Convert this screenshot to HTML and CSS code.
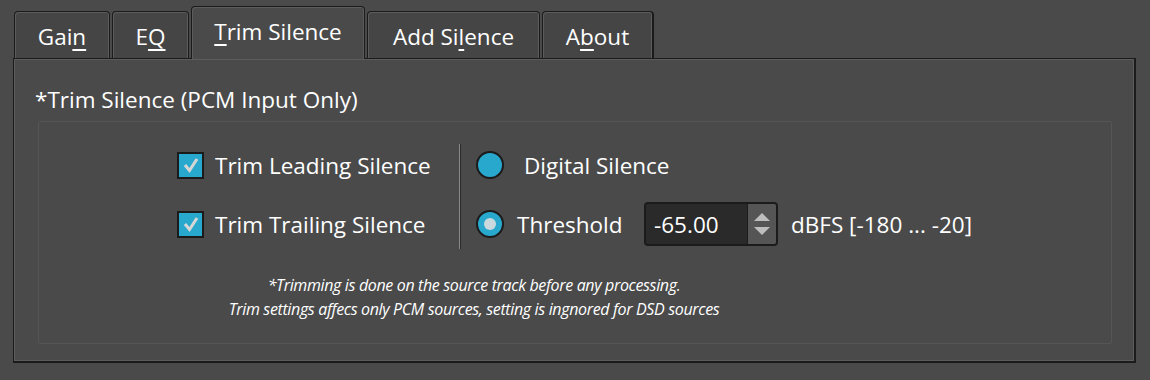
FILE: index.html
```html
<!DOCTYPE html>
<html lang="en">
<head>
    <meta charset="UTF-8">
    <title>Trim Silence</title>
    <link rel="stylesheet" href="styles.css">
</head>
<body>
    <div class="window">
        <div class="tabs">
            <div class="tab tab-gain">Gai<u>n</u></div>
            <div class="tab tab-eq">E<u>Q</u></div>
            <div class="tab tab-trim active"><u>T</u>rim Silence</div>
            <div class="tab tab-add">Add Si<u>l</u>ence</div>
            <div class="tab tab-about">A<u>b</u>out</div>
        </div>

        <div class="panel">
            <div class="panel-title">*Trim Silence (PCM Input Only)</div>

            <div class="group">
                <div class="options">
                    <div class="checks">
                        <label class="row">
                            <span class="checkbox">
                                <svg width="18" height="18" viewBox="0 0 18 18"><polyline points="3,9 7.5,14.5 15,3" fill="none" stroke="#d6d6d6" stroke-width="3"/></svg>
                            </span>
                            Trim Leading Silence
                        </label>
                        <label class="row">
                            <span class="checkbox">
                                <svg width="18" height="18" viewBox="0 0 18 18"><polyline points="3,9 7.5,14.5 15,3" fill="none" stroke="#d6d6d6" stroke-width="3"/></svg>
                            </span>
                            Trim Trailing Silence
                        </label>
                    </div>

                    <div class="separator"></div>

                    <div class="radios">
                        <label class="row">
                            <span class="radio"></span>
                            <span class="radio-label wide">Digital Silence</span>
                        </label>
                        <div class="row">
                            <span class="radio checked"></span>
                            <span class="radio-label threshold">Threshold</span>
                            <div class="spinbox">
                                <span class="spin-value">-65.00</span>
                                <span class="spin-buttons">
                                    <svg width="16" height="8" viewBox="0 0 16 8"><polygon points="8,0 16,8 0,8" fill="#bdbdbd"/></svg>
                                    <svg width="16" height="8" viewBox="0 0 16 8"><polygon points="0,0 16,0 8,8" fill="#bdbdbd"/></svg>
                                </span>
                            </div>
                            <span class="unit">dBFS [-180 ... -20]</span>
                        </div>
                    </div>
                </div>

                <div class="notes">
                    <p>*Trimming is done on the source track before any processing.</p>
                    <p>Trim settings affecs only PCM sources, setting is ingnored for DSD sources</p>
                </div>
            </div>
        </div>
    </div>
</body>
</html>
```

FILE: styles.css
```css
:root {
    --bg: #4a4a4a;
    --tab-bg: #454545;
    --dark: #1b1b1b;
    --light-edge: #5c5c5c;
    --blue: #29a8cd;
    --text: #ffffff;
}

* {
    box-sizing: border-box;
}

body {
    margin: 0;
    background: var(--bg);
    color: var(--text);
    font-family: "Open Sans", "Noto Sans", sans-serif;
    font-size: 22.5px;
}

.window {
    padding: 6px 14px 0 13px;
}

/* Tabs */
.tabs {
    display: flex;
    align-items: flex-end;
    height: 52px;
    padding-left: 1px;
    position: relative;
    z-index: 1;
}

.tab {
    height: 47px;
    display: flex;
    align-items: center;
    justify-content: center;
    padding-top: 3px;
    margin-right: 2px;
    background: var(--tab-bg);
    border: 1px solid var(--dark);
    border-bottom: none;
    border-radius: 4px 4px 0 0;
    box-shadow: inset 1px 1px 0 var(--light-edge), inset -1px 0 0 var(--light-edge);
    white-space: nowrap;
}

.tab u {
    text-underline-offset: 4px;
}

.tab-gain { width: 96px; }
.tab-eq { width: 77px; }
.tab-add { width: 173px; }
.tab-about { width: 112px; border-right-width: 2px; }

.tab.active {
    width: 174px;
    height: 53px;
    margin-bottom: -1px;
    background: var(--bg);
    padding-bottom: 6px;
}

/* Panel */
.panel {
    height: 305px;
    border: 1px solid var(--dark);
    border-right-width: 2px;
    border-bottom-width: 2px;
    box-shadow: inset 1px 1px 0 var(--light-edge), inset -1px -1px 0 var(--light-edge);
    padding: 28px 22px 0 24px;
}

.panel-title {
    height: 26px;
    line-height: 26px;
    margin-left: -3px;
}

.group {
    margin-top: 8px;
    height: 223px;
    border: 1px solid #555555;
    border-radius: 2px;
    padding: 21px 0 0 138px;
}

/* Options */
.options {
    display: flex;
    height: 105px;
}

.checks,
.radios {
    display: flex;
    flex-direction: column;
    gap: 12px;
}

.checks {
    width: 282px;
}

.row {
    height: 46px;
    display: flex;
    align-items: center;
    white-space: nowrap;
}

.row:first-child {
    padding-bottom: 2px;
}

.checkbox {
    width: 27px;
    height: 27px;
    margin-right: 11px;
    background: var(--blue);
    border: 2px solid var(--dark);
    display: flex;
    align-items: center;
    justify-content: center;
}

.separator {
    width: 2px;
    height: 105px;
    margin-top: 1px;
    background: #8a8a8a;
    border-right: 1px solid #2a2a2a;
    margin-right: 15px;
}

.radio {
    width: 28px;
    height: 28px;
    border-radius: 50%;
    background: var(--blue);
    border: 2px solid var(--dark);
    display: flex;
    align-items: center;
    justify-content: center;
    margin-right: 13px;
}

.radio.checked::after {
    content: "";
    width: 12px;
    height: 12px;
    border-radius: 50%;
    background: #c9d9de;
}

.radio-label.wide {
    margin-left: 7px;
}

.radio-label.threshold {
    width: 127px;
}

.spinbox {
    width: 134px;
    height: 44px;
    margin-right: 13px;
    display: flex;
    background: #2a2a2a;
    border: 2px solid var(--dark);
    border-radius: 4px;
    overflow: hidden;
}

.spin-value {
    flex: 1;
    display: flex;
    align-items: center;
    padding-left: 8px;
}

.spin-buttons {
    width: 29px;
    background: #555555;
    border-left: 1px solid var(--dark);
    display: flex;
    flex-direction: column;
    align-items: center;
    justify-content: center;
    gap: 6px;
}

/* Notes */
.notes {
    width: 870px;
    margin: 25px 0 0 -138px;
    text-align: center;
    font-style: italic;
    font-size: 16px;
    letter-spacing: -0.35px;
    line-height: 24px;
}

.notes p {
    margin: 0;
}
```
